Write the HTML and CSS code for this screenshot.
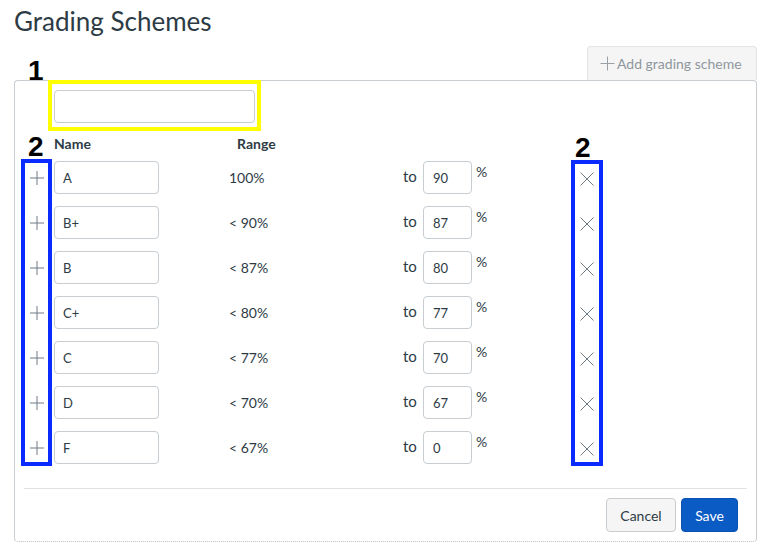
FILE: index.html
```html
<!DOCTYPE html>
<html lang="en">
<head>
<meta charset="utf-8">
<title>Grading Schemes</title>
<link rel="stylesheet" href="styles.css">
</head>
<body>
<div class="page">
  <h1 class="title">Grading Schemes</h1>
  <div class="toolbar">
    <button class="btn-add" type="button" disabled>
      <svg class="ico-plus-add" width="15" height="15" viewBox="0 0 15 15"><path d="M7.5 0.5V14.5M0.5 7.5H14.5" stroke="currentColor" stroke-width="1" fill="none"/></svg>
      <span>Add grading scheme</span>
    </button>
  </div>
  <section class="panel">
    <div class="scheme-name"><input class="field field-title" type="text" value=""></div>
    <div class="grid-head">
      <span class="head-name">Name</span>
      <span class="head-range">Range</span>
    </div>
    <div class="rows">
      <div class="row">
        <span class="cell-add"><svg width="14" height="14" viewBox="0 0 14 14"><path d="M7 0V14M0 7H14" stroke="#6f7b84" stroke-width="1" fill="none"/></svg></span>
        <input class="field field-name" type="text" value="A">
        <span class="cell-range">100%</span>
        <span class="cell-to">to</span>
        <input class="field field-min" type="text" value="90">
        <span class="cell-pct">%</span>
        <span class="cell-del"><svg width="14" height="14" viewBox="0 0 14 14"><path d="M0.5 0.5L13.5 13.5M13.5 0.5L0.5 13.5" stroke="#6f7b84" stroke-width="1" fill="none"/></svg></span>
      </div>
      <div class="row">
        <span class="cell-add"><svg width="14" height="14" viewBox="0 0 14 14"><path d="M7 0V14M0 7H14" stroke="#6f7b84" stroke-width="1" fill="none"/></svg></span>
        <input class="field field-name" type="text" value="B+">
        <span class="cell-range">&lt; 90%</span>
        <span class="cell-to">to</span>
        <input class="field field-min" type="text" value="87">
        <span class="cell-pct">%</span>
        <span class="cell-del"><svg width="14" height="14" viewBox="0 0 14 14"><path d="M0.5 0.5L13.5 13.5M13.5 0.5L0.5 13.5" stroke="#6f7b84" stroke-width="1" fill="none"/></svg></span>
      </div>
      <div class="row">
        <span class="cell-add"><svg width="14" height="14" viewBox="0 0 14 14"><path d="M7 0V14M0 7H14" stroke="#6f7b84" stroke-width="1" fill="none"/></svg></span>
        <input class="field field-name" type="text" value="B">
        <span class="cell-range">&lt; 87%</span>
        <span class="cell-to">to</span>
        <input class="field field-min" type="text" value="80">
        <span class="cell-pct">%</span>
        <span class="cell-del"><svg width="14" height="14" viewBox="0 0 14 14"><path d="M0.5 0.5L13.5 13.5M13.5 0.5L0.5 13.5" stroke="#6f7b84" stroke-width="1" fill="none"/></svg></span>
      </div>
      <div class="row">
        <span class="cell-add"><svg width="14" height="14" viewBox="0 0 14 14"><path d="M7 0V14M0 7H14" stroke="#6f7b84" stroke-width="1" fill="none"/></svg></span>
        <input class="field field-name" type="text" value="C+">
        <span class="cell-range">&lt; 80%</span>
        <span class="cell-to">to</span>
        <input class="field field-min" type="text" value="77">
        <span class="cell-pct">%</span>
        <span class="cell-del"><svg width="14" height="14" viewBox="0 0 14 14"><path d="M0.5 0.5L13.5 13.5M13.5 0.5L0.5 13.5" stroke="#6f7b84" stroke-width="1" fill="none"/></svg></span>
      </div>
      <div class="row">
        <span class="cell-add"><svg width="14" height="14" viewBox="0 0 14 14"><path d="M7 0V14M0 7H14" stroke="#6f7b84" stroke-width="1" fill="none"/></svg></span>
        <input class="field field-name" type="text" value="C">
        <span class="cell-range">&lt; 77%</span>
        <span class="cell-to">to</span>
        <input class="field field-min" type="text" value="70">
        <span class="cell-pct">%</span>
        <span class="cell-del"><svg width="14" height="14" viewBox="0 0 14 14"><path d="M0.5 0.5L13.5 13.5M13.5 0.5L0.5 13.5" stroke="#6f7b84" stroke-width="1" fill="none"/></svg></span>
      </div>
      <div class="row">
        <span class="cell-add"><svg width="14" height="14" viewBox="0 0 14 14"><path d="M7 0V14M0 7H14" stroke="#6f7b84" stroke-width="1" fill="none"/></svg></span>
        <input class="field field-name" type="text" value="D">
        <span class="cell-range">&lt; 70%</span>
        <span class="cell-to">to</span>
        <input class="field field-min" type="text" value="67">
        <span class="cell-pct">%</span>
        <span class="cell-del"><svg width="14" height="14" viewBox="0 0 14 14"><path d="M0.5 0.5L13.5 13.5M13.5 0.5L0.5 13.5" stroke="#6f7b84" stroke-width="1" fill="none"/></svg></span>
      </div>
      <div class="row">
        <span class="cell-add"><svg width="14" height="14" viewBox="0 0 14 14"><path d="M7 0V14M0 7H14" stroke="#6f7b84" stroke-width="1" fill="none"/></svg></span>
        <input class="field field-name" type="text" value="F">
        <span class="cell-range">&lt; 67%</span>
        <span class="cell-to">to</span>
        <input class="field field-min" type="text" value="0">
        <span class="cell-pct">%</span>
        <span class="cell-del"><svg width="14" height="14" viewBox="0 0 14 14"><path d="M0.5 0.5L13.5 13.5M13.5 0.5L0.5 13.5" stroke="#6f7b84" stroke-width="1" fill="none"/></svg></span>
      </div>
    </div>
    <div class="footer">
      <button class="btn btn-cancel" type="button">Cancel</button>
      <button class="btn btn-save" type="button">Save</button>
    </div>
  </section>

  <div class="mark mark-yellow"></div>
  <div class="mark mark-blue-left"></div>
  <div class="mark mark-blue-right"></div>
  <span class="mark-num num-1">1</span>
  <span class="mark-num num-2l">2</span>
  <span class="mark-num num-2r">2</span>
</div>
</body>
</html>
```

FILE: styles.css
```css
* { box-sizing: border-box; }

html, body {
  margin: 0;
  padding: 0;
  background: #ffffff;
}

body {
  font-family: Lato, "Open Sans", "Liberation Sans", sans-serif;
  color: #2d3b45;
  font-size: 14px;
}

.page {
  position: relative;
  width: 769px;
  height: 555px;
  overflow: hidden;
}

.title {
  margin: 6px 0 0 14px;
  font-size: 26px;
  line-height: 31px;
  font-weight: 400;
  color: #2d3b45;
}

.toolbar {
  margin-top: 9px;
  height: 34px;
  display: flex;
  justify-content: flex-end;
  padding-right: 12px;
}

.btn-add {
  display: flex;
  align-items: center;
  gap: 2px;
  height: 34px;
  width: 170px;
  padding: 0 0 0 12px;
  border: 1px solid #e3e6e8;
  border-bottom: none;
  border-radius: 4px 4px 0 0;
  background: #f5f5f5;
  color: #8f979d;
  font-family: Lato, "Open Sans", sans-serif;
  font-size: 14px;
}

.ico-plus-add { color: #9aa1a6; flex: none; }

.panel {
  margin: 0 12px 0 14px;
  border: 1px solid #c7cdd1;
  border-bottom: 1px dotted #b8bec2;
  border-radius: 4px;
  padding: 9px 9px 9px 9px;
}

.field {
  height: 33px;
  border: 1px solid #c7cdd1;
  border-radius: 4px;
  background: #fff;
  font-family: Lato, "Open Sans", sans-serif;
  font-size: 13px;
  color: #2d3b45;
  padding: 0 0 0 8px;
  margin: 0;
  outline: none;
}

.scheme-name {
  padding-left: 30px;
}

.field-title { width: 201px; }

.grid-head {
  margin-top: 11px;
  height: 20px;
  line-height: 20px;
  display: flex;
  font-weight: 700;
  font-size: 14px;
  padding-left: 30px;
}

.head-name { width: 183px; }

.rows {
  margin-top: 7px;
  display: flex;
  flex-direction: column;
  gap: 12px;
}

.row {
  display: flex;
  align-items: center;
  height: 33px;
}

.cell-add {
  width: 26px;
  margin-right: 4px;
  display: flex;
  justify-content: center;
  align-items: center;
}

.field-name { width: 105px; }

.cell-range {
  margin-left: 70px;
  width: 174px;
  font-size: 14px;
}

.cell-to {
  width: 20px;
  font-size: 15px;
  margin-top: -3px;
}

.field-min { width: 49px; padding-left: 9px; }

.cell-pct {
  align-self: flex-start;
  margin-left: 4px;
  width: 14px;
  line-height: 22px;
  font-size: 14px;
}

.cell-del {
  margin-left: 81px;
  width: 32px;
  display: flex;
  justify-content: center;
  align-items: center;
  padding-top: 2px;
}

.footer {
  margin-top: 24px;
  border-top: 1px solid #dfe2e4;
  padding: 9px 9px 0 0;
  display: flex;
  justify-content: flex-end;
  gap: 5px;
}

.btn {
  height: 34px;
  border-radius: 4px;
  font-family: Lato, "Open Sans", sans-serif;
  font-size: 14px;
  padding: 0;
}

.btn-cancel {
  width: 70px;
  background: #f5f5f5;
  border: 1px solid #c7cdd1;
  color: #2d3b45;
}

.btn-save {
  width: 57px;
  background: #0b5bc4;
  border: 1px solid #0a52b0;
  color: #ffffff;
}

/* annotation overlays */
.mark {
  position: absolute;
  border-style: solid;
  border-width: 4px;
}

.mark-yellow {
  left: 48px;
  top: 80px;
  width: 213px;
  height: 51px;
  border-color: #ffff00;
}

.mark-blue-left {
  left: 21px;
  top: 159px;
  width: 31px;
  height: 307px;
  border-color: #0a2bff;
}

.mark-blue-right {
  left: 571px;
  top: 160px;
  width: 32px;
  height: 306px;
  border-color: #0a2bff;
}

.mark-num {
  position: absolute;
  font-family: "Liberation Sans", Arial, sans-serif;
  font-weight: 700;
  font-size: 28px;
  line-height: 28px;
  color: #000000;
}

.num-1 { left: 28px; top: 57px; }
.num-2l { left: 28px; top: 133px; }
.num-2r { left: 575px; top: 134px; }
```
